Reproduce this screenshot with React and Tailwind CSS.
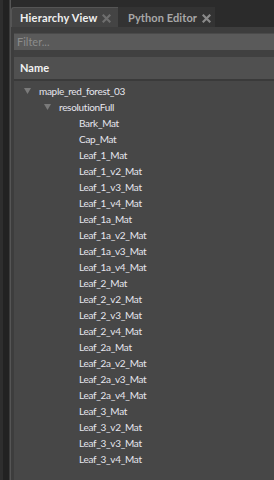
import React from 'react';

const leaves = [
  'Bark_Mat', 'Cap_Mat',
  'Leaf_1_Mat', 'Leaf_1_v2_Mat', 'Leaf_1_v3_Mat', 'Leaf_1_v4_Mat',
  'Leaf_1a_Mat', 'Leaf_1a_v2_Mat', 'Leaf_1a_v3_Mat', 'Leaf_1a_v4_Mat',
  'Leaf_2_Mat', 'Leaf_2_v2_Mat', 'Leaf_2_v3_Mat', 'Leaf_2_v4_Mat',
  'Leaf_2a_Mat', 'Leaf_2a_v2_Mat', 'Leaf_2a_v3_Mat', 'Leaf_2a_v4_Mat',
  'Leaf_3_Mat', 'Leaf_3_v2_Mat', 'Leaf_3_v3_Mat', 'Leaf_3_v4_Mat',
];

const Close = ({ color }) => (
  <svg width="9" height="9" viewBox="0 0 9 9" className="shrink-0">
    <path d="M1.5 1.5 L7.5 7.5 M7.5 1.5 L1.5 7.5" stroke={color} strokeWidth="2.2" strokeLinecap="square" />
  </svg>
);

const Arrow = () => (
  <svg width="7" height="6" viewBox="0 0 7 6" className="shrink-0">
    <path d="M0 0 H7 L3.5 6 Z" fill="#7a7a7a" />
  </svg>
);

const Row = ({ indent, open, children }) => (
  <div className="h-4 flex items-center" style={{ paddingLeft: indent }}>
    <div className="w-[15px] flex items-center">{open && <Arrow />}</div>
    <span className="text-[10px] tracking-[-0.3px] text-[#e6e6ee] leading-none">{children}</span>
  </div>
);

export default function App() {
  return (
    <div className="w-[274px] h-[480px] bg-[#2b2b2b] flex overflow-hidden" style={{ fontFamily: 'Lato, "Open Sans", sans-serif' }}>
      {/* left dock strip */}
      <div className="w-[3px] bg-[#2e2e2e]" />
      <div className="w-[6px] bg-[#222]" />
      <div className="w-[2px] bg-[#3c3c3c] border-r border-[#555]" />

      <div className="flex-1 flex flex-col min-w-0">
        {/* tabs */}
        <div className="h-[27px] flex items-end shrink-0">
          <div className="h-[20px] w-[107px] bg-[#444] rounded-tl-[3px] border-t border-l border-[#555] flex items-center gap-[4px] pl-[8px] pt-[2px]">
            <span className="text-[11px] font-bold text-[#f0f0f0] tracking-[0.2px]">Hierarchy View</span>
            <Close color="#6e6e6e" />
          </div>
          <div className="h-[20px] w-[97px] bg-[#333] flex items-center gap-[5px] pl-[10px] pt-[2px]">
            <span className="text-[11px] font-bold text-[#a8a8a8] tracking-[0.1px]">Python Editor</span>
            <Close color="#8a8a8a" />
          </div>
        </div>

        {/* panel */}
        <div className="flex-1 bg-[#3d3d3d] flex flex-col pt-[6px] pl-[3px]">
          <div className="h-[17px] bg-[#5a5a5a] border-t border-[#4a4a4a] flex items-center pl-[3px]">
            <span className="text-[11px] text-[#8c8c8c]">Filter...</span>
          </div>
          <div className="h-[7px] bg-[#404040]" />
          <div className="h-[24px] bg-[#505050] flex items-center pl-[6px] border-b-2 border-[#3a3a3a]">
            <span className="text-[11px] font-bold text-[#f2f2f2]">Name</span>
          </div>
          <div className="flex-1 bg-[#474747] pt-[2px]">
            <Row indent={10} open>maple_red_forest_03</Row>
            <Row indent={30} open>resolutionFull</Row>
            {leaves.map((l) => (
              <Row key={l} indent={50}>{l}</Row>
            ))}
          </div>
        </div>
      </div>
    </div>
  );
}
